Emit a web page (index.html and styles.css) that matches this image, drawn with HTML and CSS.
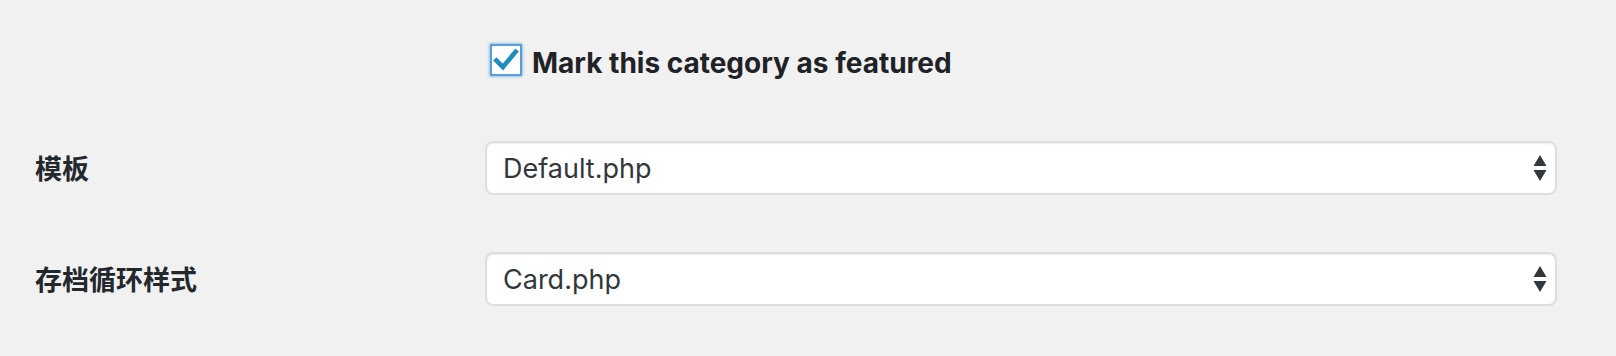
FILE: index.html
```html
<!DOCTYPE html>
<html lang="zh">
<head>
<meta charset="utf-8">
<title>Category options</title>
<link rel="stylesheet" href="styles.css">
</head>
<body>
<div class="form">
  <div class="row row-check">
    <div class="th"></div>
    <div class="td">
      <label class="check-label">
        <span class="checkbox">
          <svg viewBox="0 0 32 32" width="28" height="28"><path d="M5 16.5 L12.5 24 L27 6.5" fill="none" stroke="#1e8cbe" stroke-width="5.2" stroke-linecap="square" stroke-linejoin="miter"/></svg>
        </span>
        <span class="check-text">Mark this category as featured</span>
      </label>
    </div>
  </div>
  <div class="row row-tpl">
    <div class="th">模板</div>
    <div class="td">
      <div class="select">
        <span class="select-value">Default.php</span>
        <svg class="arrows" viewBox="0 0 14 26" width="14" height="26"><path d="M7 0 L13.5 11 L0.5 11 Z M0.5 15 L13.5 15 L7 26 Z" fill="#32373c"/></svg>
      </div>
    </div>
  </div>
  <div class="row row-loop">
    <div class="th">存档循环样式</div>
    <div class="td">
      <div class="select">
        <span class="select-value">Card.php</span>
        <svg class="arrows" viewBox="0 0 14 26" width="14" height="26"><path d="M7 0 L13.5 11 L0.5 11 Z M0.5 15 L13.5 15 L7 26 Z" fill="#32373c"/></svg>
      </div>
    </div>
  </div>
</div>
</body>
</html>
```
FILE: styles.css
```css
html, body {
  margin: 0;
  padding: 0;
  background: #f1f1f1;
}
body {
  width: 1616px;
  height: 356px;
  overflow: hidden;
  color: #23282d;
  font-family: Inter, "Noto Sans CJK SC", sans-serif;
}
.form {
  padding-left: 35px;
}
.row {
  display: flex;
  align-items: center;
}
.th {
  width: 450px;
  flex: none;
  font-family: "Noto Sans CJK SC", sans-serif;
  font-weight: 700;
  font-size: 27px;
  line-height: 40px;
}
.td {
  width: 1072px;
  flex: none;
}
.row-check {
  padding-top: 44px;
  height: 32px;
}
.row-tpl {
  margin-top: 65px;
}
.row-loop {
  margin-top: 57px;
}
.check-label {
  display: flex;
  align-items: center;
  padding-left: 5px;
}
.checkbox {
  box-sizing: border-box;
  width: 32px;
  height: 32px;
  background: #fff;
  border: 2px solid #5b9dd9;
  box-shadow: 0 0 3px rgba(30, 140, 190, 0.8);
  display: flex;
  align-items: center;
  justify-content: center;
}
.check-text {
  margin-left: 10px;
  font-weight: 650;
  font-size: 28px;
  line-height: 32px;
  position: relative;
  top: 3px;
  color: #1f2327;
}
.select {
  box-sizing: border-box;
  height: 54px;
  background: #fff;
  border: 2px solid #dedede;
  border-radius: 8px;
  box-shadow: inset 0 1px 2px rgba(0, 0, 0, 0.07);
  display: flex;
  align-items: center;
  justify-content: space-between;
  padding: 0 8px 0 16px;
}
.select-value {
  font-size: 27px;
  font-weight: 400;
  color: #32373c;
}
.arrows {
  display: block;
}
```
